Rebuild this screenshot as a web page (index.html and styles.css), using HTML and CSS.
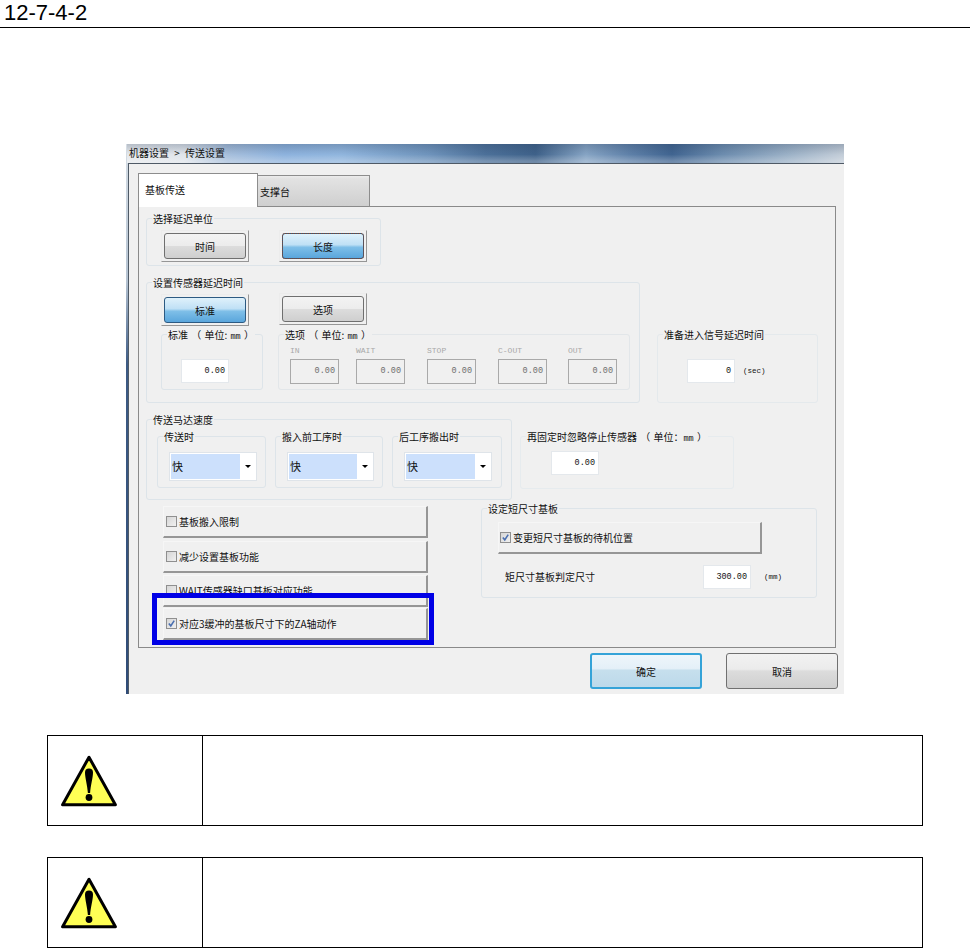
FILE: index.html
```html
<!DOCTYPE html>
<html lang="zh-CN">
<head>
<meta charset="utf-8">
<title>12-7-4-2</title>
<link rel="stylesheet" href="styles.css">
</head>
<body>
<header class="doc-head">12-7-4-2</header>

<section class="shot">
  <div class="titlebar">机器设置 &gt; 传送设置</div>
  <div class="dialog">
    <div class="tabs">
      <div class="tab tab-on">基板传送</div>
      <div class="tab tab-off">支撑台</div>
    </div>
    <div class="panel">

      <div class="group unit-group">
        <div class="legend">选择延迟单位</div>
        <div class="btn-row">
          <div class="tbtn"><div class="face">时间</div></div>
          <div class="tbtn"><div class="face face-on face-focus">长度</div></div>
        </div>
      </div>

      <div class="row row-delay">
        <div class="group delay-group">
          <div class="legend">设置传感器延迟时间</div>
          <div class="btn-row">
            <div class="tbtn"><div class="face face-on">标准</div></div>
            <div class="tbtn tbtn-up"><div class="face">选项</div></div>
          </div>
          <div class="sub-row">
            <div class="group std-group">
              <div class="legend legend-wide">标准 （ 单位: <span class="mono">mm</span> ）</div>
              <div class="num std-num">0.00</div>
            </div>
            <div class="group opt-group">
              <div class="legend legend-wide">选项 （ 单位: <span class="mono">mm</span> ）</div>
              <div class="opt-grid">
                <div class="opt-field"><span class="opt-label">IN</span><div class="num num-off">0.00</div></div>
                <div class="opt-field"><span class="opt-label">WAIT</span><div class="num num-off">0.00</div></div>
                <div class="opt-field"><span class="opt-label">STOP</span><div class="num num-off">0.00</div></div>
                <div class="opt-field"><span class="opt-label">C-OUT</span><div class="num num-off">0.00</div></div>
                <div class="opt-field"><span class="opt-label">OUT</span><div class="num num-off">0.00</div></div>
              </div>
            </div>
          </div>
        </div>
        <div class="group ready-group">
          <div class="legend">准备进入信号延迟时间</div>
          <div class="num-line ready-line">
            <div class="num">0</div>
            <span class="unit">(sec)</span>
          </div>
        </div>
      </div>

      <div class="row row-speed">
        <div class="group speed-group">
          <div class="legend">传送马达速度</div>
          <div class="speed-row">
            <div class="group speed-a">
              <div class="legend">传送时</div>
              <div class="combo"><span class="combo-val">快</span><span class="combo-arrow"></span></div>
            </div>
            <div class="group speed-b">
              <div class="legend">搬入前工序时</div>
              <div class="combo"><span class="combo-val">快</span><span class="combo-arrow"></span></div>
            </div>
            <div class="group speed-c">
              <div class="legend">后工序搬出时</div>
              <div class="combo"><span class="combo-val">快</span><span class="combo-arrow"></span></div>
            </div>
          </div>
        </div>
        <div class="group refix-group">
          <div class="legend legend-wide">再固定时忽略停止传感器 （ 单位：<span class="mono">mm</span> ）</div>
          <div class="num refix-num">0.00</div>
        </div>
      </div>

      <div class="row row-opts">
        <div class="chk-col">
          <div class="chk"><span class="box"></span>基板搬入限制</div>
          <div class="chk"><span class="box"></span>减少设置基板功能</div>
          <div class="chk"><span class="box"></span>WAIT传感器缺口基板对应功能</div>
          <div class="chk">
            <span class="box"><svg class="tick" viewBox="0 0 10 10"><path d="M2 5l2.200 2.600L8 1.800" fill="none" stroke="#4a6fb0" stroke-width="1.800"/></svg></span>对应3缓冲的基板尺寸下的ZA轴动作
            <div class="frame"></div>
          </div>
        </div>
        <div class="group short-group">
          <div class="legend">设定短尺寸基板</div>
          <div class="chk chk-short">
            <span class="box"><svg class="tick" viewBox="0 0 10 10"><path d="M2 5l2.200 2.600L8 1.800" fill="none" stroke="#4a6fb0" stroke-width="1.800"/></svg></span>变更短尺寸基板的待机位置
          </div>
          <div class="num-line short-line">
            <span class="short-label">矩尺寸基板判定尺寸</span>
            <div class="num">300.00</div>
            <span class="unit">(mm)</span>
          </div>
        </div>
      </div>

    </div>
    <div class="actions">
      <div class="act act-ok">确定</div>
      <div class="act act-cancel">取消</div>
    </div>
  </div>
</section>

<section class="notice notice-first">
  <div class="notice-icon">
    <svg class="warn" viewBox="0 0 56 52"><path d="M28 2.200L1.600 49.800H54.400Z" fill="#ffff55" stroke="#000" stroke-width="3" stroke-linejoin="round"/><path d="M24 17.500a4 4 0 0 1 8 0c0 5-2.400 13-2.900 20.500h-2.200C26.400 30.500 24 22.500 24 17.500Z" fill="#000"/><circle cx="28" cy="42.500" r="3.400" fill="#000"/></svg>
  </div>
  <div class="notice-body"></div>
</section>

<section class="notice notice-second">
  <div class="notice-icon">
    <svg class="warn" viewBox="0 0 56 52"><path d="M28 2.200L1.600 49.800H54.400Z" fill="#ffff55" stroke="#000" stroke-width="3" stroke-linejoin="round"/><path d="M24 17.500a4 4 0 0 1 8 0c0 5-2.400 13-2.900 20.500h-2.200C26.400 30.500 24 22.500 24 17.500Z" fill="#000"/><circle cx="28" cy="42.500" r="3.400" fill="#000"/></svg>
  </div>
  <div class="notice-body"></div>
</section>
</body>
</html>
```
FILE: styles.css
```css
* { box-sizing: border-box; }
html, body { margin: 0; padding: 0; background: #fff; }
body { font-family: "Liberation Sans", "Noto Sans CJK SC", sans-serif; color: #000; overflow: hidden; }

.doc-head {
  height: 28px;
  border-bottom: 1px solid #000;
  font-size: 22px;
  line-height: 25px;
  padding: 0 0 0 4px;
}

/* screenshot */
.shot {
  width: 718px;
  height: 550px;
  margin: 116px 0 0 126px;
  padding-left: 2px;
  display: flex;
  flex-direction: column;
  background: linear-gradient(180deg, #d5dde5 0, #b5c3d2 25%, #3c5a84 40%, #2f4c78 100%);
  font-family: "Noto Sans CJK SC", "Liberation Sans", sans-serif;
  font-size: 10px;
  color: #111;
}
.titlebar {
  height: 19px;
  margin-left: -1px;
  padding-left: 2px;
  line-height: 17px;
  word-spacing: 3px;
  background:
    linear-gradient(180deg, rgba(40,60,90,.25) 0, rgba(40,60,90,0) 55%, rgba(255,255,255,.25) 90%),
    linear-gradient(90deg, #e6e9ec 0, #dfe4ea 8%, #a6bedb 14%, #8db2dd 22%, #90b5dd 30%, #6f94bc 42%, #4c7099 50%, #3e6189 57%, #86a4c4 64%, #5f81a9 70%, #406490 76%, #6c8cae 83%, #9ab0c6 92%, #c3cdd8 100%);
}
.dialog {
  flex: 1;
  background: #f0f0f0;
  border-top: 1px solid #4f5a66;
  border-left: 1px solid #4f5a66;
  padding: 9px 8px 0 9px;
  display: flex;
  flex-direction: column;
}
.tabs { display: flex; height: 33px; position: relative; z-index: 1; }
.tab-on {
  width: 120px;
  height: 34px;
  background: #fff;
  border: 1px solid #8d8d8d;
  border-bottom: 0;
  padding-left: 6px;
  line-height: 32px;
}
.tab-off {
  width: 112px;
  height: 31px;
  margin-top: 2px;
  background: linear-gradient(180deg, #ececec 0, #e2e2e2 10%, #cfcfcf 100%);
  border: 1px solid #8d8d8d;
  border-left: 0;
  border-bottom: 0;
  line-height: 32px;
  padding-left: 2px;
}
.panel {
  width: 698px;
  height: 442px;
  border: 1px solid #8a8a8a;
  padding: 11px 0 0 7px;
  display: flex;
  flex-direction: column;
  flex: none;
}

/* group boxes */
.group {
  border: 1px solid #dde4e9;
  border-radius: 3px;
  flex: none;
}
.legend {
  display: block;
  width: fit-content;
  height: 14px;
  line-height: 14px;
  margin: -7px 0 0 5px;
  padding: 0 1px;
  background: #f0f0f0;
  white-space: nowrap;
}
.legend-wide { word-spacing: 1px; }
.mono { font-family: "Liberation Mono", monospace; font-size: 8.500px; }
.row { display: flex; align-items: flex-start; flex: none; }

.unit-group { width: 235px; height: 48px; }
.btn-row { display: flex; gap: 30px; margin: 4px 0 0 14px; align-items: flex-start; }
.tbtn {
  width: 88px;
  height: 32px;
  padding: 2px;
  border: 1px solid;
  border-color: #ececec #969696 #969696 #ececec;
}
.tbtn-up { margin-top: -1px; }
.face {
  height: 100%;
  display: flex;
  align-items: center;
  justify-content: center;
  border: 1px solid #6f6f6f;
  border-radius: 3px;
  background: linear-gradient(180deg, #f3f3f3 0, #ececec 48%, #dcdcdc 52%, #cfcfcf 100%);
}
.face-on {
  border-color: #2c5a82;
  background: linear-gradient(180deg, #dff1fb 0, #bfe0f5 45%, #7fbfe8 55%, #5aa6dc 100%);
}
.face-focus { outline: 1px dotted #8a4a30; outline-offset: -1px; }

.row-delay { margin-top: 16px; }
.delay-group { width: 494px; height: 121px; }
.sub-row { display: flex; gap: 15px; margin: 8px 0 0 14px; }
.std-group { width: 102px; height: 56px; }
.opt-group { width: 352px; height: 56px; border-color: #e2e6e9; }
.num {
  width: 48px;
  height: 24px;
  flex: none;
  background: #fff;
  border: 1px solid #e4e8ec;
  text-align: right;
  padding-right: 3px;
  font-family: "Liberation Mono", monospace;
  font-size: 8.500px;
  line-height: 22px;
}
.std-num { margin: 17px 0 0 19px; }
.opt-grid {
  display: grid;
  grid-template-columns: 66px 71px 71px 70px 49px;
  margin: 3px 0 0 11px;
}
.opt-label {
  display: block;
  height: 14px;
  line-height: 12px;
  font-family: "Liberation Mono", monospace;
  font-size: 8px;
  color: #a8a8a8;
}
.num-off {
  width: 49px;
  height: 25px;
  background: #f0f0f0;
  border-color: #a9a9a9;
  color: #6e6e6e;
}
.ready-group { width: 161px; height: 69px; margin: 52px 0 0 17px; border-color: #e4e9ec; }
.num-line { display: flex; align-items: center; }
.ready-line { margin: 17px 0 0 29px; }
.unit {
  font-family: "Liberation Mono", monospace;
  font-size: 7.500px;
  margin-left: 8px;
}

.row-speed { margin-top: 16px; }
.speed-group { width: 366px; height: 81px; }
.speed-row { display: flex; margin: 9px 0 0 10px; }
.speed-a { width: 109px; height: 52px; }
.speed-b { width: 108px; height: 52px; margin-left: 9px; }
.speed-c { width: 110px; height: 52px; margin-left: 9px; }
.combo {
  width: 88px;
  height: 29px;
  margin: 8px 0 0 11px;
  padding: 1px 0 1px 1px;
  background: #fff;
  border: 1px solid #dfe4e9;
  display: flex;
  align-items: center;
}
.combo-val {
  width: 69px;
  height: 25px;
  background: #cce0fc;
  line-height: 25px;
  padding-left: 1px;
  font-size: 11px;
}
.combo-arrow {
  width: 0;
  height: 0;
  margin-left: 5px;
  border: 3px solid transparent;
  border-top: 3px solid #000;
  border-bottom: 0;
}
.speed-b .combo { width: 87px; }
.speed-b .combo-val { width: 68px; }
.refix-group { width: 214px; height: 53px; margin: 17px 0 0 8px; border-color: #e6ebee; }
.refix-num { margin: 7px 0 0 30px; }

.row-opts { margin-top: 6px; }
.chk-col { width: 265px; margin-left: 17px; display: flex; flex-direction: column; }
.chk {
  height: 32px;
  position: relative;
  display: flex;
  align-items: center;
  padding-left: 2px;
  border: 1px solid;
  border-width: 1px 2px 2px 1px;
  border-color: #f6f6f6 #969696 #969696 #f6f6f6;
  font-size: 10px;
  white-space: nowrap;
}
.chk-col .chk:nth-child(2) { margin-top: 3px; }
.chk-col .chk:nth-child(3) { margin-top: 2px; }
.chk-col .chk:nth-child(4) { margin-top: 1px; }
.box {
  width: 11px;
  height: 11px;
  flex: none;
  margin-right: 2px;
  border: 1px solid #8f8f8f;
  background: linear-gradient(135deg, #d6d6d6, #f0f0f0);
  display: flex;
}
.tick { width: 9px; height: 9px; display: block; }
.frame {
  position: absolute;
  left: -12px;
  right: -8px;
  top: -16px;
  bottom: -7px;
  border: 5px solid #0000e6;
  pointer-events: none;
}
.short-group { width: 336px; height: 90px; margin: 2px 0 0 53px; border-color: #dde4e9; }
.chk-short { width: 264px; margin: 6px 0 0 16px; padding-left: 1px; }
.short-line { margin: 11px 0 0 23px; }
.short-label { width: 198px; flex: none; padding-bottom: 2px; }
.short-line .unit { margin-left: 13px; }

.actions { display: flex; justify-content: flex-end; gap: 24px; margin: 5px -2px 0 0; }
.act {
  width: 112px;
  height: 36px;
  display: flex;
  align-items: center;
  justify-content: center;
  border-radius: 3px;
}
.act-ok {
  border: 2px solid #35a3d8;
  background: linear-gradient(180deg, #eef5fa 0, #e4f0f8 42%, #c6dfed 48%, #bcd9ea 100%);
}
.act-cancel {
  border: 1px solid #707070;
  background: linear-gradient(180deg, #f2f2f2 0, #ebebeb 45%, #dcdcdc 50%, #cfcfcf 100%);
}

/* caution boxes */
.notice {
  width: 876px;
  height: 91px;
  margin-left: 47px;
  border: 1px solid #000;
  display: grid;
  grid-template-columns: 155px 1fr;
}
.notice-first { margin-top: 41px; }
.notice-second { margin-top: 31px; }
.notice-icon {
  border-right: 1px solid #000;
  padding-left: 13px;
  display: flex;
  align-items: center;
}
.warn { width: 56px; height: 52px; display: block; }
```
